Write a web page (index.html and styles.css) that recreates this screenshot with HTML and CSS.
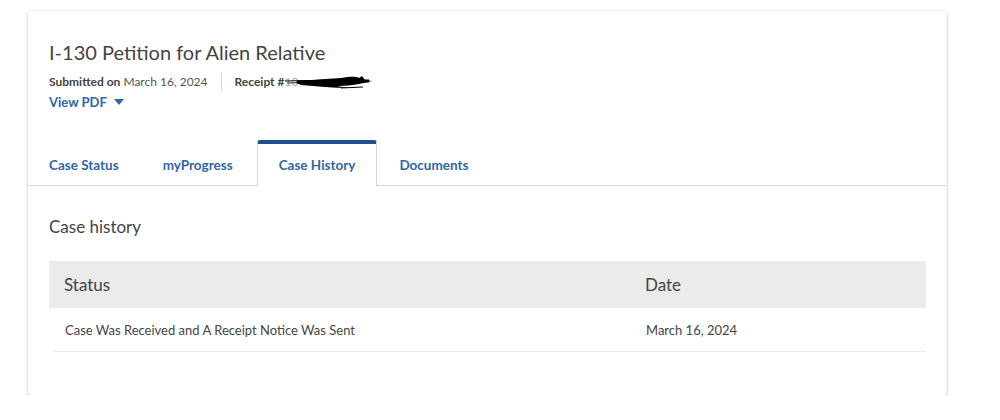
FILE: index.html
```html
<!DOCTYPE html>
<html>
<head>
<meta charset="utf-8">
<link rel="stylesheet" href="styles.css">
</head>
<body>
<div class="card">
  <div class="header">
    <h1 class="title">I-130 Petition for Alien Relative</h1>
    <div class="meta">
      <span><b>Submitted on</b> March 16, 2024</span>
      <span class="sep"></span>
      <span class="receipt"><b>Receipt #</b><span class="redact">10</span>
        <svg class="scribble" width="90" height="16" viewBox="0 0 90 16"><path d="M0 7 L24 6.5" stroke="#000" stroke-width="1"/><path d="M2 9 L26 8.5" stroke="#000" stroke-width="0.8"/><path d="M10 8 C24 6 40 5 56 4 C64 3 70 2 74 4 L77 2 L80 6 L87 7 L79 9 C70 11 62 12 52 12 L64 14 C48 14 32 12 16 11 Z" fill="#000"/><path d="M12 8 C32 7 56 6 84 7" stroke="#000" stroke-width="3" fill="none"/><path d="M56 14 L78 13" stroke="#000" stroke-width="1"/></svg>
      </span>
    </div>
    <a class="pdf">View PDF <span class="caret"></span></a>
  </div>
  <div class="tabs">
    <div class="tab">Case Status</div>
    <div class="tab">myProgress</div>
    <div class="tab active">Case History</div>
    <div class="tab">Documents</div>
  </div>
  <div class="content">
    <h2 class="section">Case history</h2>
    <div class="table">
      <div class="thead">
        <div class="c1">Status</div>
        <div class="c2">Date</div>
      </div>
      <div class="trow">
        <div class="c1">Case Was Received and A Receipt Notice Was Sent</div>
        <div class="c2">March 16, 2024</div>
      </div>
    </div>
  </div>
</div>
</body>
</html>
```
FILE: styles.css
```css
html, body { margin: 0; padding: 0; background: #fff; }
body { font-family: Lato, "Open Sans", sans-serif; color: #454545; }
.card {
  margin: 11px 0 0 28px;
  width: 919px;
  height: 384px;
  border-radius: 4px;
  box-shadow: 0 1px 3px rgba(0,0,0,0.28), 0 0 2px rgba(0,0,0,0.06);
  background: #fff;
}
.header { padding: 27px 21px 0; }
.title { margin: 0; font-size: 20px; font-weight: 400; line-height: 28px; color: #444; }
.meta { display: flex; align-items: center; font-size: 12px; line-height: 18px; margin-top: 7px; color: #555; }
.meta b { font-weight: 700; color: #444; }
.sep { width: 1px; height: 18px; background: #d8d8d8; margin: 0 13px; }
.receipt { position: relative; display: inline-flex; align-items: center; }
.redact { color: #aaa; font-size: 12px; padding-right: 72px; white-space: nowrap; }
.scribble { position: absolute; left: 50px; top: 1px; }
.pdf { display: inline-flex; align-items: center; font-size: 13px; font-weight: 700; color: #2e67a6; line-height: 18px; }
.caret { display: inline-block; margin-left: 7px; width: 0; height: 0; border-left: 5px solid transparent; border-right: 5px solid transparent; border-top: 6px solid #2e67a6; }
.tabs { display: flex; margin-top: 29px; border-bottom: 1px solid #d6d6d6; height: 45px; }
.tab { padding: 0 21px; font-size: 13.5px; font-weight: 700; color: #2e67a6; display: flex; align-items: center; height: 41px; border: 1px solid transparent; border-top: 4px solid transparent; border-bottom: none; }
.tab:nth-child(2) { padding-right: 23px; }
.tab.active { border-color: #d6d6d6; border-top: 4px solid #20508f; border-radius: 3px 3px 0 0; background: #fff; height: 42px; margin-bottom: -1px; }
.tab:first-child { border-left: none; }
.content { padding: 0 21px; }
.section { margin: 30px 0 0; font-size: 17px; font-weight: 400; color: #444; line-height: 22px; }
.table { margin-top: 23px; }
.thead { display: flex; background: #ebebeb; height: 47px; align-items: center; font-size: 17px; color: #444; }
.trow { display: flex; height: 43px; align-items: center; font-size: 13px; color: #454545; border-bottom: 1px solid #ececec; margin-left: 4px; }
.c1 { box-sizing: border-box; }
.thead .c1 { width: 596px; padding-left: 15px; }
.trow .c1 { width: 593px; padding-left: 12px; }
.c2 { flex: 1; }
```
